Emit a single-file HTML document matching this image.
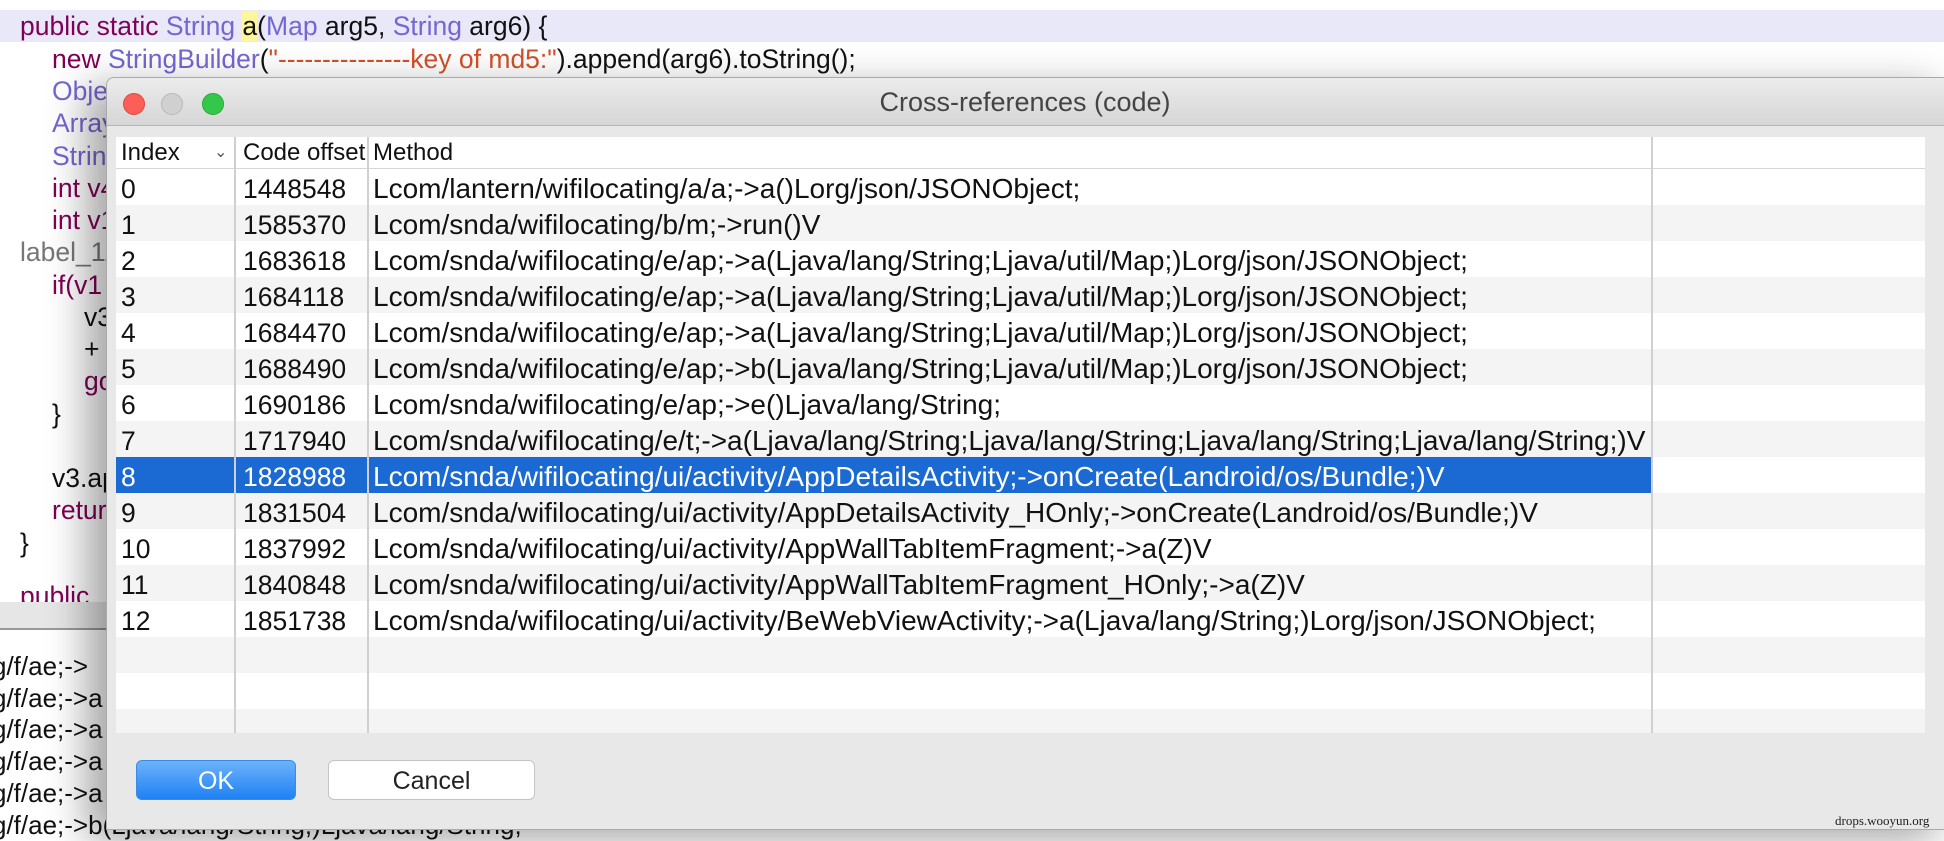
<!DOCTYPE html>
<html><head><meta charset="utf-8"><style>
*{margin:0;padding:0;box-sizing:border-box}
body{width:1944px;height:836px;overflow:hidden;background:#fff;position:relative;font-family:"Liberation Sans",sans-serif}
.code{position:absolute;left:0;top:0;width:1944px;height:836px;font-size:26.5px;color:#111}
.cl{position:absolute;white-space:pre;line-height:32px}
.k{color:#7f0055}.t{color:#7467d3}.s{color:#d2502a}
.hl{position:absolute;left:0;top:10px;width:1944px;height:32px;background:#e8e8f8}
.bp{position:absolute;left:0;top:602px;width:200px;height:234px;background:#fff;border-top:1px solid #aaa}
.bpbar{position:absolute;left:0;top:602px;width:200px;height:28px;background:#e6e6e6;border-bottom:2px solid #999}
.bl{position:absolute;left:-8px;font-size:26px;white-space:pre;color:#111}
.dlg{position:absolute;left:106px;top:77px;width:1850px;height:753px;background:#e8e8e8;border-radius:8px 8px 0 0;border:1px solid #aaa;box-shadow:-20px 10px 40px rgba(0,0,0,.35)}
.tb{position:absolute;left:0;top:0;right:0;height:48px;background:linear-gradient(#ececec,#d6d6d6);border-bottom:1px solid #b5b5b5;border-radius:8px 8px 0 0}
.tl{position:absolute;top:15px;width:22px;height:22px;border-radius:50%}
.title{position:absolute;left:0;right:0;top:9px;text-align:center;font-size:27px;color:#444;padding-right:12px}
.tbl{position:absolute;left:9px;top:59px;width:1809px;height:596px;background:#fff;overflow:hidden}
.row{position:absolute;left:0;width:1809px;height:36px;font-size:26.5px;line-height:40px;color:#111}
.row span{position:absolute;white-space:pre}
.row span.m{font-size:28px}
.alt{background:#f4f4f4}
.sel{background:#1b6ad3;color:#fff}
.vd{position:absolute;top:0;width:2px;height:596px;background:#d0d0d0}
.btn{position:absolute;top:682px;height:40px;border-radius:6px;font-size:25px;text-align:center;line-height:40px}
</style></head><body>
<div class="code">
<div class="hl"></div>
<div class="cl" style="left:20px;top:10px"><span class="k">public static </span><span class="t">String </span><span style="background:#fff59a">a</span>(<span class="t">Map</span> arg5, <span class="t">String</span> arg6) {</div>
<div class="cl" style="left:52px;top:43px"><span class="k">new </span><span class="t">StringBuilder</span>(<span class="s">"---------------key of md5:"</span>).append(arg6).toString();</div>
<div class="cl t" style="left:52px;top:75px">Object</div>
<div class="cl t" style="left:52px;top:107px">Array</div>
<div class="cl t" style="left:52px;top:140px">String</div>
<div class="cl k" style="left:52px;top:172px">int v4</div>
<div class="cl k" style="left:52px;top:204px">int v1</div>
<div class="cl" style="left:20px;top:236px;color:#777">label_11</div>
<div class="cl k" style="left:52px;top:269px">if(v1</div>
<div class="cl" style="left:84px;top:301px">v3</div>
<div class="cl" style="left:84px;top:333px">+</div>
<div class="cl k" style="left:84px;top:365px">go</div>
<div class="cl" style="left:52px;top:398px">}</div>
<div class="cl" style="left:52px;top:462px">v3.ap</div>
<div class="cl k" style="left:52px;top:494px">return</div>
<div class="cl" style="left:20px;top:527px">}</div>
<div class="cl k" style="left:20px;top:580px">public</div>
<div class="bp"></div><div class="bpbar"></div>
<div class="bl" style="top:651px">g/f/ae;-></div>
<div class="bl" style="top:683px">g/f/ae;->a</div>
<div class="bl" style="top:714px">g/f/ae;->a</div>
<div class="bl" style="top:746px">g/f/ae;->a</div>
<div class="bl" style="top:778px">g/f/ae;->a</div>
<div class="bl" style="top:810px">g/f/ae;->b(Ljava/lang/String;)Ljava/lang/String;</div>
</div>
<div class="dlg">
<div class="tb">
<div class="tl" style="left:16px;background:#fc5f57;border:1px solid #de4a42"></div>
<div class="tl" style="left:54px;background:#d0d0d0;border:1px solid #b8b8b8"></div>
<div class="tl" style="left:95px;background:#34c84a;border:1px solid #27a83a"></div>
<div class="title">Cross-references (code)</div>
</div>
<div class="tbl">
<div class="row" style="top:0;height:32px;line-height:32px;font-size:24px;border-bottom:1px solid #d6d6d6"><span style="left:5px">Index</span><span style="left:98px;font-size:16px;color:#555">&#8964;</span><span style="left:127px">Code offset</span><span style="left:257px">Method</span></div>
<div class="row" style="top:32px"><span style="left:5px">0</span><span style="left:127px">1448548</span><span class="m" style="left:257px">Lcom/lantern/wifilocating/a/a;->a()Lorg/json/JSONObject;</span></div>
<div class="row alt" style="top:68px"><span style="left:5px">1</span><span style="left:127px">1585370</span><span class="m" style="left:257px">Lcom/snda/wifilocating/b/m;->run()V</span></div>
<div class="row" style="top:104px"><span style="left:5px">2</span><span style="left:127px">1683618</span><span class="m" style="left:257px">Lcom/snda/wifilocating/e/ap;->a(Ljava/lang/String;Ljava/util/Map;)Lorg/json/JSONObject;</span></div>
<div class="row alt" style="top:140px"><span style="left:5px">3</span><span style="left:127px">1684118</span><span class="m" style="left:257px">Lcom/snda/wifilocating/e/ap;->a(Ljava/lang/String;Ljava/util/Map;)Lorg/json/JSONObject;</span></div>
<div class="row" style="top:176px"><span style="left:5px">4</span><span style="left:127px">1684470</span><span class="m" style="left:257px">Lcom/snda/wifilocating/e/ap;->a(Ljava/lang/String;Ljava/util/Map;)Lorg/json/JSONObject;</span></div>
<div class="row alt" style="top:212px"><span style="left:5px">5</span><span style="left:127px">1688490</span><span class="m" style="left:257px">Lcom/snda/wifilocating/e/ap;->b(Ljava/lang/String;Ljava/util/Map;)Lorg/json/JSONObject;</span></div>
<div class="row" style="top:248px"><span style="left:5px">6</span><span style="left:127px">1690186</span><span class="m" style="left:257px">Lcom/snda/wifilocating/e/ap;->e()Ljava/lang/String;</span></div>
<div class="row alt" style="top:284px"><span style="left:5px">7</span><span style="left:127px">1717940</span><span class="m" style="left:257px">Lcom/snda/wifilocating/e/t;->a(Ljava/lang/String;Ljava/lang/String;Ljava/lang/String;Ljava/lang/String;)V</span></div>
<div class="row sel" style="top:320px;width:1535px"><span style="left:5px">8</span><span style="left:127px">1828988</span><span class="m" style="left:257px">Lcom/snda/wifilocating/ui/activity/AppDetailsActivity;->onCreate(Landroid/os/Bundle;)V</span></div>
<div class="row alt" style="top:356px"><span style="left:5px">9</span><span style="left:127px">1831504</span><span class="m" style="left:257px">Lcom/snda/wifilocating/ui/activity/AppDetailsActivity_HOnly;->onCreate(Landroid/os/Bundle;)V</span></div>
<div class="row" style="top:392px"><span style="left:5px">10</span><span style="left:127px">1837992</span><span class="m" style="left:257px">Lcom/snda/wifilocating/ui/activity/AppWallTabItemFragment;->a(Z)V</span></div>
<div class="row alt" style="top:428px"><span style="left:5px">11</span><span style="left:127px">1840848</span><span class="m" style="left:257px">Lcom/snda/wifilocating/ui/activity/AppWallTabItemFragment_HOnly;->a(Z)V</span></div>
<div class="row" style="top:464px"><span style="left:5px">12</span><span style="left:127px">1851738</span><span class="m" style="left:257px">Lcom/snda/wifilocating/ui/activity/BeWebViewActivity;->a(Ljava/lang/String;)Lorg/json/JSONObject;</span></div>
<div class="row alt" style="top:500px"></div>
<div class="row" style="top:536px"></div>
<div class="row alt" style="top:572px"></div>
<div class="vd" style="left:118px"></div>
<div class="vd" style="left:251px"></div>
<div class="vd" style="left:1535px"></div>
</div>
<div class="btn" style="left:29px;width:160px;background:linear-gradient(#6cb3fa,#1f81f3);color:#fff;border:1px solid #3a8ae8">OK</div>
<div class="btn" style="left:221px;width:207px;background:#fff;border:1px solid #c4c4c4;color:#222">Cancel</div>
<div style="position:absolute;left:1728px;bottom:0;font-family:'Liberation Serif',serif;font-size:13px;color:#222">drops.wooyun.org</div>
</div>
</body></html>
